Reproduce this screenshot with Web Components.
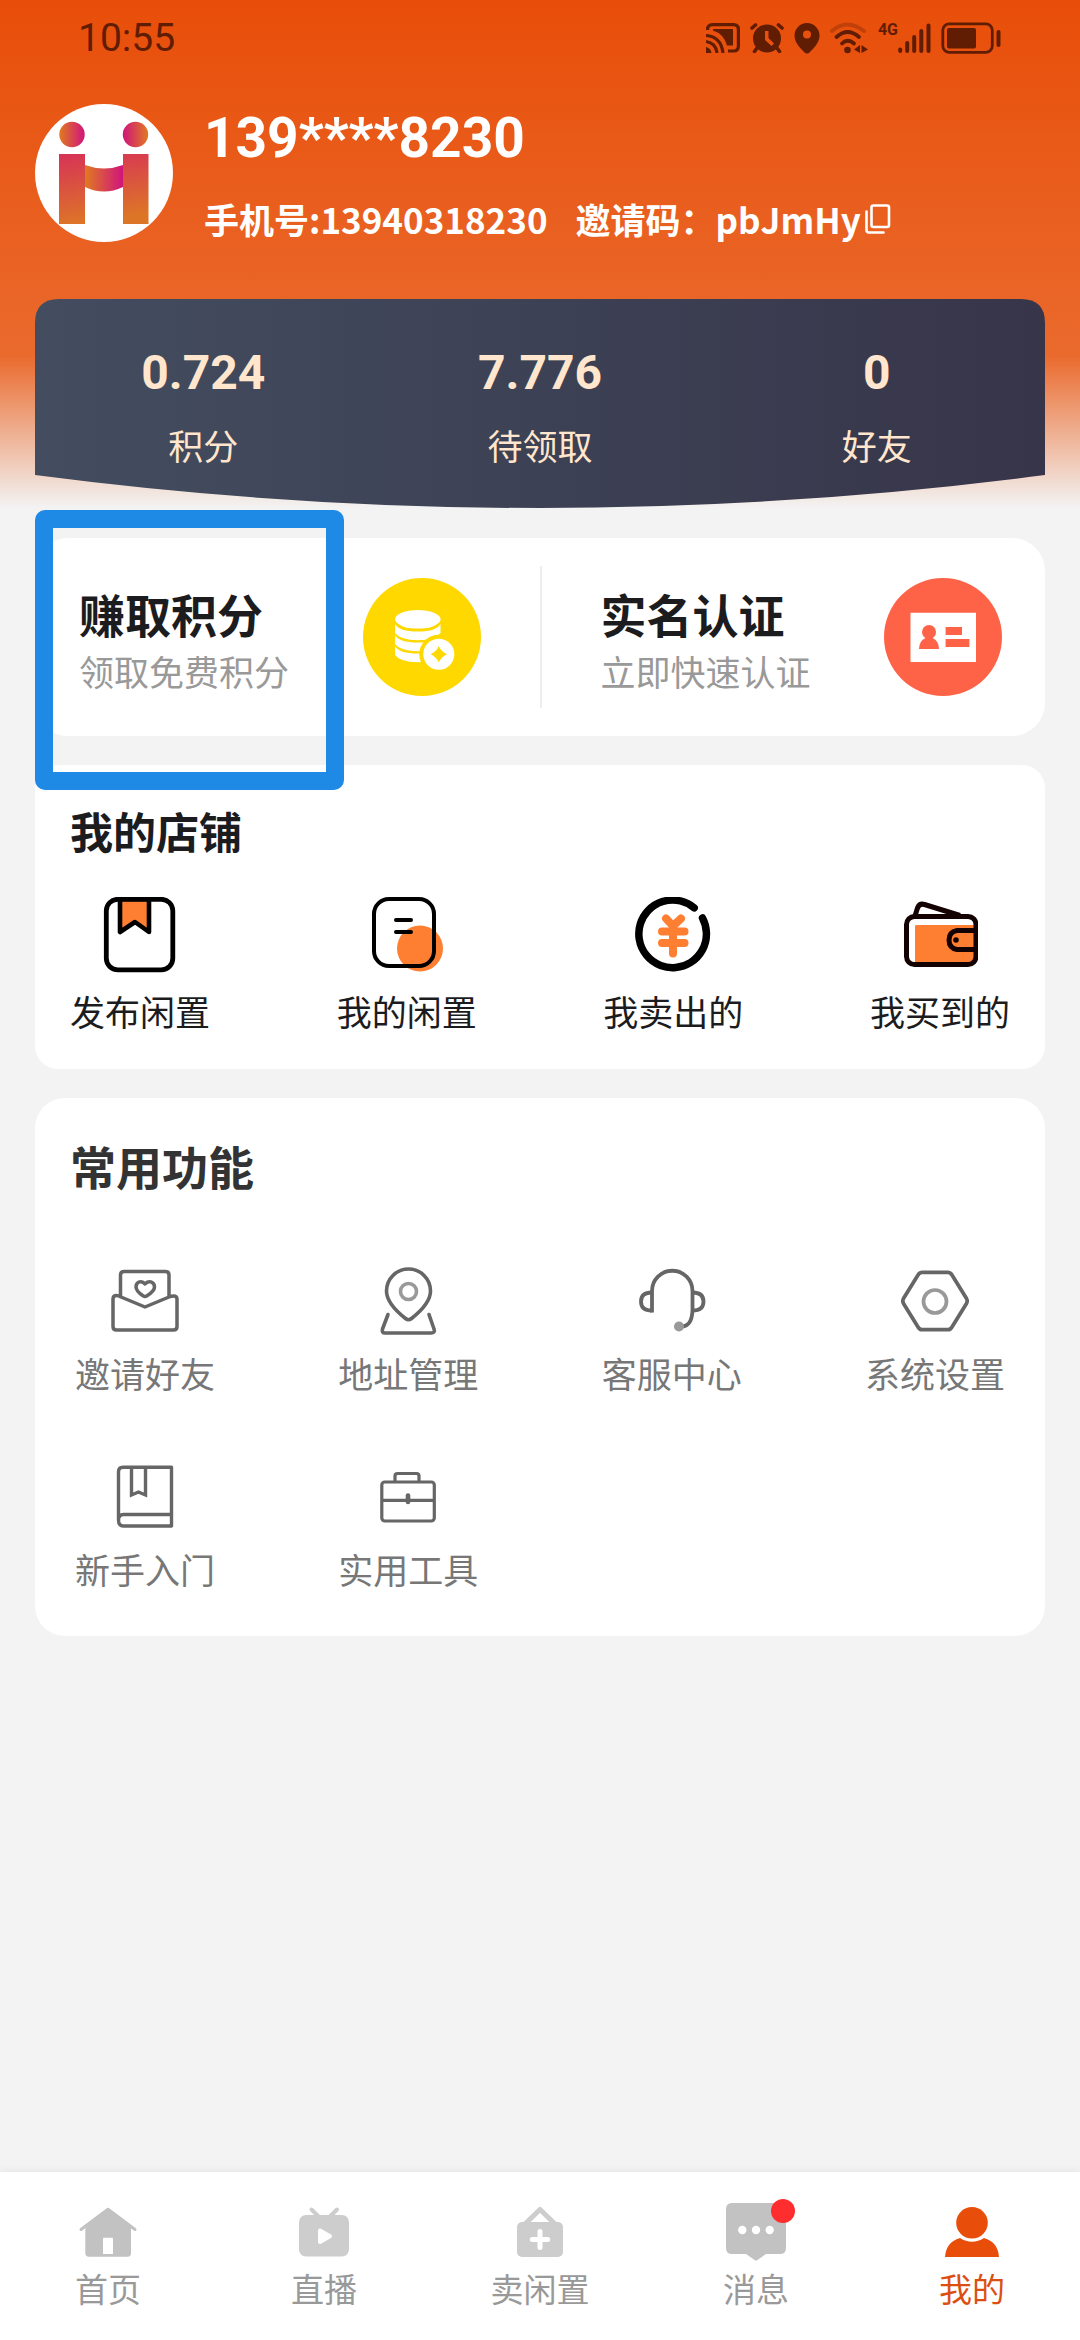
<!DOCTYPE html>
<html lang="zh-CN">
<head>
<meta charset="utf-8">
<meta name="viewport" content="width=device-width, initial-scale=1">
<title>我的</title>
<style>
  html, body { margin: 0; }
  body { background: #f3f3f3; font-family: "Noto Sans CJK SC", sans-serif; color: #1c1c1e; }
</style>
</head>
<body>
<app-page>
  <page-header slot="header">
    <status-bar slot="status" time="10:55"></status-bar>
    <user-profile slot="profile" name="139****8230" phone="13940318230" code="pbJmHy"></user-profile>
    <stats-panel>
      <stat-item value="0.724">积分</stat-item>
      <stat-item value="7.776">待领取</stat-item>
      <stat-item value="0">好友</stat-item>
    </stats-panel>
  </page-header>

  <promo-card>
    <promo-item highlighted icon="coins" heading="赚取积分">领取免费积分</promo-item>
    <promo-item icon="idcard" heading="实名认证">立即快速认证</promo-item>
  </promo-card>

  <shop-card heading="我的店铺">
    <menu-item icon="publish">发布闲置</menu-item>
    <menu-item icon="mine">我的闲置</menu-item>
    <menu-item icon="sold">我卖出的</menu-item>
    <menu-item icon="bought">我买到的</menu-item>
  </shop-card>

  <tools-card heading="常用功能">
    <menu-item icon="invite">邀请好友</menu-item>
    <menu-item icon="address">地址管理</menu-item>
    <menu-item icon="service">客服中心</menu-item>
    <menu-item icon="settings">系统设置</menu-item>
    <menu-item icon="guide">新手入门</menu-item>
    <menu-item icon="toolbox">实用工具</menu-item>
  </tools-card>

  <tab-bar slot="footer">
    <tab-item icon="home">首页</tab-item>
    <tab-item icon="live">直播</tab-item>
    <tab-item icon="sell">卖闲置</tab-item>
    <tab-item icon="message" badge>消息</tab-item>
    <tab-item icon="me" active>我的</tab-item>
  </tab-bar>
</app-page>

<script>
const ICONS = {
  // status bar
  cast: [34, 30, `<g fill="none" stroke="currentColor" stroke-width="3.2"><path d="M1.6 7V6.500Q1.600 1.600 6.500 1.600H27.500Q32.400 1.600 32.400 6.500V23Q32.400 28 27.500 28H22"/><path d="M0 12.500Q15 13.500 17 30M0 18.500Q10 20 11 30"/></g><path fill="currentColor" d="M7 6H27V22.500H21Q18 11 7 7.500ZM0 24Q5 25 5.500 30H0Z"/>`],
  alarm: [34, 30, `<g fill="none" stroke="currentColor" stroke-width="3.600" stroke-linecap="round"><path d="M2 5L5.500 2M32 5L28.500 2M7 25L4.500 28.500M27 25L29.500 28.500"/></g><path fill="currentColor" fill-rule="evenodd" d="M17 1.500A14 14 0 1 0 17 29.500A14 14 0 1 0 17 1.500ZM15 8H18.500V15L24 20.500L21.500 23L15 17Z"/>`],
  pin: [26, 32, `<path fill="currentColor" fill-rule="evenodd" d="M13 1A12.500 12.500 0 0 0 .500 13.500C.500 20 5 25 10 30Q13 33 16 30C21 25 25.500 20 25.500 13.500A12.500 12.500 0 0 0 13 1ZM13 8.500A4 4 0 1 1 13 16.500A4 4 0 1 1 13 8.500Z"/>`],
  wifi: [38, 32, `<g fill="none" stroke="currentColor" stroke-width="3.800" stroke-linecap="round"><path opacity=".3" d="M2 9Q17 -4 34 9"/><path d="M6.500 15Q17.500 5 29 15M12 21.500Q17.500 16 24 21.500"/></g><circle cx="17.500" cy="28" r="3.300" fill="currentColor"/><path fill="currentColor" d="M24 27.500L30 23V31ZM31.500 23L38 27.500L31.500 31Z"/>`],
  signal: [33, 32, `<g stroke="currentColor" stroke-width="4" stroke-linecap="round"><path d="M2.200 27.500V29M9.200 21V29M16.200 15V29M23.300 9V29M30.500 3.500V29"/></g>`],
  battery: [61, 32, `<rect x="1.800" y="1.800" width="49.500" height="28.500" rx="6.500" fill="none" stroke="currentColor" stroke-width="2.800"/><rect x="6" y="6" width="29" height="20.500" rx="2" fill="currentColor"/><path d="M57.500 10V23" stroke="currentColor" stroke-width="4" stroke-linecap="round"/>`],
  copy: [26, 30, `<g fill="none" stroke="currentColor" stroke-width="2.600" stroke-linejoin="round" stroke-linecap="round"><rect x="6.500" y="1.500" width="17.500" height="21.500" rx="2"/><path d="M1.500 7.500V26Q1.500 28.500 4 28.500H18.500"/></g>`],
  logo: [138, 138, `<defs><linearGradient id="a"><stop stop-color="#e07a20"/><stop offset="1" stop-color="#d0147c"/></linearGradient><linearGradient id="b"><stop stop-color="#d0147c"/><stop offset="1" stop-color="#e07a20"/></linearGradient><linearGradient id="c" x2=".2" y2="1"><stop stop-color="#d73257"/><stop offset="1" stop-color="#dd7527"/></linearGradient></defs><circle cx="69" cy="69" r="69" fill="#fff"/><circle cx="37" cy="30.500" r="12.700" fill="url(#a)"/><circle cx="100.500" cy="30.500" r="12.700" fill="url(#b)"/><path d="M50 61Q69 68 88 61V83Q69 92 50 83Z" fill="url(#a)"/><path d="M24 50H50V120H24ZM88 50H113.500V120H88Z" fill="url(#c)"/>`],

  // promo circles
  coins: [118, 118, `<circle cx="59" cy="59" r="59" fill="#ffd800"/><g fill="#fff"><ellipse cx="54.800" cy="41.300" rx="22.800" ry="9.300"/><path d="M32 46Q36 53.500 54.800 53.500T77.500 46V55Q72 62.300 54.800 62.300T32 55ZM32 57Q36 64.500 54.800 64.500T77.500 57V66Q72 73.300 54.800 73.300T32 66ZM32 68Q36 75.500 54.800 75.500T77.500 68V77Q72 84.300 54.800 84.300T32 77Z"/></g><circle cx="75.800" cy="76.300" r="19.500" fill="#ffd800"/><circle cx="75.800" cy="76.300" r="15.500" fill="#fff"/><path fill="#ffd800" d="M75.800 68Q78 73.500 84 76.300Q78 79 75.800 84.600Q73.500 79 67.600 76.300Q73.500 73.500 75.800 68Z"/>`],
  idcard: [118, 118, `<circle cx="59" cy="59" r="59" fill="#ff6347"/><path fill="#fff" d="M26.500 34.700H92V84H26.500Z"/><g fill="#ff6347"><circle cx="45" cy="54" r="7"/><path d="M41.500 58H48.500V60Q55 63 55 71H35Q35 63 41.500 60ZM61.600 49H78V57H61.600ZM61.600 61H85.400V69H61.600Z"/></g>`],

  // shop
  publish: [76, 76, `<path d="M18 2H47V35L33 25L18 35Z" fill="#ff7f32" stroke="#000" stroke-width="4.600" stroke-linejoin="round"/><rect x="4.300" y="2.300" width="66.500" height="70.500" rx="11.500" fill="none" stroke="#000" stroke-width="4.800"/>`],
  mine: [76, 76, `<circle cx="51" cy="51.500" r="23" fill="#ff7f32"/><rect x="5" y="2" width="60" height="67" rx="15" fill="none" stroke="#000" stroke-width="4"/><path d="M27 23H42M27 35H42" stroke="#000" stroke-width="4" stroke-linecap="round"/>`],
  sold: [76, 76, `<path d="M59.200 10.800A33.800 33.800 0 1 0 67.500 21" fill="none" stroke="#000" stroke-width="7.500" stroke-linecap="round"/><path d="M31 21.500L38 29L46 21.500M38 29V56.500M27 34.500H49.500M27 46H49.500" fill="none" stroke="#ff7f32" stroke-width="8" stroke-linecap="round" stroke-linejoin="round"/>`],
  bought: [76, 76, `<path fill="#ff7f32" d="M13 29Q13 28 15 28H72V66H13Z"/><g fill="none" stroke="#140202" stroke-width="5" stroke-linejoin="round"><path d="M13 19L15.500 11Q17.500 6 22.500 7.500L58 18.500"/><rect x="4.500" y="19.500" width="69.500" height="48" rx="8"/><path d="M73 33.500H55Q47 35 47 43T55 52.500H73"/></g><circle cx="54" cy="43" r="2.800" fill="#140202"/>`],

  // tools
  invite: [68, 68, `<g fill="none" stroke="#666" stroke-width="3.500" stroke-linejoin="round"><path d="M9.500 29V8Q9.500 4.500 13 4.500H54.500Q58 4.500 58 8V29"/><path d="M5.500 28.500Q7.500 28.500 10 30L34 40L58 30Q60 29 62.500 29Q66 29 66 32V59.500Q66 63 62.500 63H5.500Q2 63 2 59.500V32Q2 28.500 5.500 28.500Z"/><path d="M34 17C31 13 25 14.500 25 20Q25 24 32 28.800Q34 30 36 28.800Q43.500 24 43.500 20C43.500 14.500 37 13 34 17Z"/></g>`],
  address: [68, 68, `<g fill="none" stroke="#666" stroke-width="3.600" stroke-linejoin="round" stroke-linecap="round"><path d="M34.500 2A22 22 0 0 0 12.500 24C12.500 34 22 44 31.500 51.500Q34.500 54 37.500 51.500C47 44 56.500 34 56.500 24A22 22 0 0 0 34.500 2Z"/><path d="M14 47.500L8.500 62Q7.500 66 11 66H57Q61.500 66 60 62L55 47.500"/><circle cx="34.500" cy="24.500" r="8" stroke="#999"/></g>`],
  service: [68, 68, `<g fill="none" stroke="#666" stroke-width="3.800"><path d="M14 45.500V24A20.250 20.250 0 0 1 54.500 24V43Q54 59 44 59.500"/><path d="M14 25.500Q3 25.500 3 34.500T14 43.700M54.500 25.500Q65.500 25.500 65.500 34.500T54.500 43.700"/></g><circle cx="41" cy="59.500" r="5" fill="#999"/>`],
  settings: [68, 68, `<path d="M21 5.300H47Q49.500 5.300 51 8L65.500 31.500Q66.800 34 65.500 36.500L51 60Q49.500 62.700 47 62.700H21Q18.500 62.700 17 60L2.500 36.500Q1.200 34 2.500 31.500L17 8Q18.500 5.300 21 5.300Z" fill="none" stroke="#666" stroke-width="3.700"/><circle cx="34" cy="34.500" r="11.500" fill="none" stroke="#999" stroke-width="3.700"/>`],
  guide: [68, 68, `<g fill="none" stroke="#666" stroke-width="3.400" stroke-linejoin="round"><path d="M60.500 51.500V4.300H12Q7.500 4.300 7.500 9V57Q7.500 63 12.500 63H60.500V51.500H12.500Q7.500 51.500 7.500 57"/><path stroke-linejoin="miter" d="M20.500 4.300V32L27.500 29L34.500 32V4.300"/></g>`],
  toolbox: [68, 68, `<g fill="none" stroke="#666" stroke-width="3.200"><rect x="7.800" y="19" width="52.500" height="39" rx="3"/><path d="M21 19V13Q21 10.500 23.500 10.500H42.500Q45 10.500 45 13V19M8 37.300H60"/></g><path d="M34 32.500V39" stroke="#666" stroke-width="4.600" stroke-linecap="round"/>`],

  // tabs
  home: [60, 60, `<path fill="#c2c2c2" fill-rule="evenodd" d="M30 7.500L53 26V51Q53 54.800 49.500 54.800H11Q7.300 54.800 7.300 51V26ZM26 35.700Q25 35.700 25 37V52H35V37Q35 35.700 34 35.700Z"/><path fill="none" stroke="#c2c2c2" stroke-width="3" stroke-linecap="round" stroke-linejoin="round" d="M3 27.500L30 7.200L57 27.500"/>`],
  live: [60, 60, `<rect x="5" y="13" width="50" height="41.500" rx="7" fill="#cdcdcd"/><path d="M17.500 7.500L25 15M43 7.500L35.500 15" stroke="#cdcdcd" stroke-width="4" stroke-linecap="round"/><path fill="#fff" stroke="#fff" stroke-width="4" stroke-linejoin="round" d="M26 28.500V40L36 34.200Z"/>`],
  sell: [60, 60, `<rect x="7" y="20" width="46" height="35" rx="5" fill="#cdcdcd"/><path d="M15.500 21.500L30 7.500L44.500 21.500" fill="none" stroke="#cdcdcd" stroke-width="5" stroke-linejoin="round"/><path d="M30 29.500V45.500M22.300 37.500H37.700" stroke="#fff" stroke-width="5" stroke-linecap="round"/>`],
  message: [60, 60, `<path fill="#c2c2c2" d="M6 1H54Q60 1 60 7V46Q60 52 54 52H40L31 58.200Q30 59 29 58.200L20 52H6Q0 52 0 46V7Q0 1 6 1Z"/><g fill="#fff"><circle cx="16.300" cy="28" r="4.200"/><circle cx="30" cy="28" r="4.200"/><circle cx="43.700" cy="28" r="4.200"/></g>`],
  me: [60, 60, `<path fill="#e84e09" d="M3 55Q4 40 18 36Q30 43.500 42 36Q56 40 57 55Z"/><circle cx="30" cy="20.800" r="15.800" fill="#e84e09"/>`]
};

class BaseElement extends HTMLElement {
  connectedCallback() {
    if (this.shadowRoot) return;
    this.attachShadow({ mode: "open" }).innerHTML = this.render();
  }
  attr(name) { return this.getAttribute(name) || ""; }
}

customElements.define("app-icon", class extends BaseElement {
  render() {
    const [w, h, art] = ICONS[this.attr("name")];
    return `<style>:host{display:block;flex:none}svg{display:block}</style>
      <svg width="${w}" height="${h}" viewBox="0 0 ${w} ${h}" aria-hidden="true">${art}</svg>`;
  }
});

customElements.define("app-page", class extends BaseElement {
  render() {
    return `<style>
      :host{display:flex;flex-direction:column;min-height:100vh}
      main{flex:1;display:flex;flex-direction:column;gap:29px;padding:30px 35px}
      slot[name=footer]{display:block;position:sticky;bottom:0}
    </style>
    <slot name="header"></slot><main><slot></slot></main><slot name="footer"></slot>`;
  }
});

customElements.define("page-header", class extends BaseElement {
  render() {
    return `<style>
      :host{display:block;background:linear-gradient(#e84e09 0,#ea6a2d 70%,#f3f3f3 100%)}
      .body{padding:28px 35px 0;display:flex;flex-direction:column;gap:56px}
    </style>
    <slot name="status"></slot><div class="body"><slot name="profile"></slot><slot></slot></div>`;
  }
});

customElements.define("status-bar", class extends BaseElement {
  render() {
    return `<style>
      :host{display:flex;align-items:center;justify-content:space-between;height:76px;padding:0 78px;color:#611d03}
      time{font:400 39px/48px Roboto,sans-serif}
      .icons,.net{display:flex;align-items:center}
      .icons{gap:10px}
      .net{align-items:flex-start}
      .net span{font:700 16px/16px Roboto,sans-serif}
    </style>
    <time>${this.attr("time")}</time>
    <div class="icons">
      <app-icon name="cast"></app-icon><app-icon name="alarm"></app-icon>
      <app-icon name="pin"></app-icon><app-icon name="wifi"></app-icon>
      <div class="net"><span>4G</span><app-icon name="signal"></app-icon></div>
      <app-icon name="battery"></app-icon>
    </div>`;
  }
});

customElements.define("user-profile", class extends BaseElement {
  render() {
    return `<style>
      :host{display:flex;align-items:flex-start;gap:31px;color:#fff}
      .info{display:flex;flex-direction:column;gap:29px;padding-top:6px}
      h1{margin:0;font:700 55px/56px Roboto,sans-serif}
      .line{display:flex;align-items:center;gap:28px;font-size:35px;font-weight:700;line-height:48px}
      .code{display:flex;align-items:center;gap:4px}
      button{border:0;padding:0;background:none;color:inherit;cursor:pointer}
    </style>
    <app-icon name="logo"></app-icon>
    <div class="info">
      <h1>${this.attr("name")}</h1>
      <div class="line">
        <span>手机号:${this.attr("phone")}</span>
        <span class="code"><span>邀请码：${this.attr("code")}</span><button type="button" aria-label="复制"><app-icon name="copy"></app-icon></button></span>
      </div>
    </div>`;
  }
});

customElements.define("stats-panel", class extends BaseElement {
  render() {
    return `<style>
      :host{display:grid;color:#ffe6cc}
      svg,.row{grid-area:1/1}
      svg{display:block;width:100%;height:100%;min-height:0;contain:size}
      .row{display:flex;padding:46px 0 39px}
    </style>
    <svg viewBox="0 0 1010 209" preserveAspectRatio="none" aria-hidden="true">
      <defs><linearGradient id="g"><stop stop-color="#434d5f"/><stop offset="1" stop-color="#37354a"/></linearGradient></defs>
      <path fill="url(#g)" d="M0 24Q0 0 24 0H986Q1010 0 1010 24V176Q505 242 0 176Z"/>
    </svg>
    <div class="row"><slot></slot></div>`;
  }
});

customElements.define("stat-item", class extends BaseElement {
  render() {
    return `<style>
      :host{flex:1;display:flex;flex-direction:column;align-items:center;gap:20px}
      strong{font:700 48px/56px Roboto,sans-serif}
      span{font-size:35px;line-height:48px}
    </style>
    <strong>${this.attr("value")}</strong><span><slot></slot></span>`;
  }
});

customElements.define("promo-card", class extends BaseElement {
  render() {
    return `<style>
      :host{display:flex;align-items:center;gap:59px;background:#fff;border-radius:33px;padding:28px 43px 28px 44px}
      .rule{order:1;width:2px;align-self:stretch;background:#eee}
      ::slotted(:last-child){order:2}
    </style>
    <slot></slot><div class="rule"></div>`;
  }
});

customElements.define("promo-item", class extends BaseElement {
  render() {
    return `<style>
      :host{flex:1;display:block;position:relative}
      a{display:flex;align-items:center;justify-content:space-between;height:142px;color:inherit;text-decoration:none}
      .text{display:flex;flex-direction:column;gap:6px;padding-top:6px}
      b{font-size:46px;line-height:56px;font-weight:700}
      small{font-size:35px;line-height:48px;color:#999}
      .frame{display:none}
      :host([highlighted]) .frame{display:block;position:absolute;box-sizing:border-box;left:-44px;top:-56px;width:309px;height:280px;border:18px solid #1f8ae6;border-radius:10px;pointer-events:none;z-index:1}
    </style>
    <a href="#"><span class="text"><b>${this.attr("heading")}</b><small><slot></slot></small></span><app-icon name="${this.attr("icon")}"></app-icon></a>
    <div class="frame"></div>`;
  }
});

customElements.define("shop-card", class extends BaseElement {
  render() {
    return `<style>
      :host{display:flex;flex-direction:column;gap:39px;background:#fff;border-radius:23px;padding:37px 35px 34px}
      h2{margin:0;font-size:43px;line-height:56px;font-weight:700}
      nav{display:flex;justify-content:space-between}
    </style>
    <h2>${this.attr("heading")}</h2><nav><slot></slot></nav>`;
  }
});

customElements.define("tools-card", class extends BaseElement {
  render() {
    return `<style>
      :host{display:flex;flex-direction:column;gap:74px;background:#fff;border-radius:30px;padding:39px 35px 43px}
      h2{margin:0;font-size:46px;line-height:56px;font-weight:700;color:#333}
      nav{display:grid;grid-template-columns:repeat(4,max-content);justify-content:space-between;row-gap:66px;padding:0 5px;color:#777}
    </style>
    <h2>${this.attr("heading")}</h2><nav><slot></slot></nav>`;
  }
});

customElements.define("menu-item", class extends BaseElement {
  render() {
    return `<style>
      :host{display:block}
      a{display:flex;flex-direction:column;align-items:center;gap:14px;color:inherit;text-decoration:none;font-size:35px;line-height:48px}
    </style>
    <a href="#"><app-icon name="${this.attr("icon")}"></app-icon><span><slot></slot></span></a>`;
  }
});

customElements.define("tab-bar", class extends BaseElement {
  render() {
    return `<style>
      :host{display:block}
      nav{display:flex;background:#fff;padding:30px 0 32px;box-shadow:0 0 8px rgba(0,0,0,.08)}
    </style>
    <nav><slot></slot></nav>`;
  }
});

customElements.define("tab-item", class extends BaseElement {
  render() {
    return `<style>
      :host{flex:1;display:block;color:#999}
      :host([active]){color:#dc4f12}
      a{display:flex;flex-direction:column;align-items:center;gap:6px;color:inherit;text-decoration:none;font-size:33px;line-height:40px}
      .icon{position:relative}
      .dot{display:none}
      :host([badge]) .dot{display:block;position:absolute;top:-3px;right:-9px;width:24px;height:24px;border-radius:50%;background:#fe2e2e}
    </style>
    <a href="#"><span class="icon"><app-icon name="${this.attr("icon")}"></app-icon><i class="dot"></i></span><span><slot></slot></span></a>`;
  }
});
</script>
</body>
</html>
